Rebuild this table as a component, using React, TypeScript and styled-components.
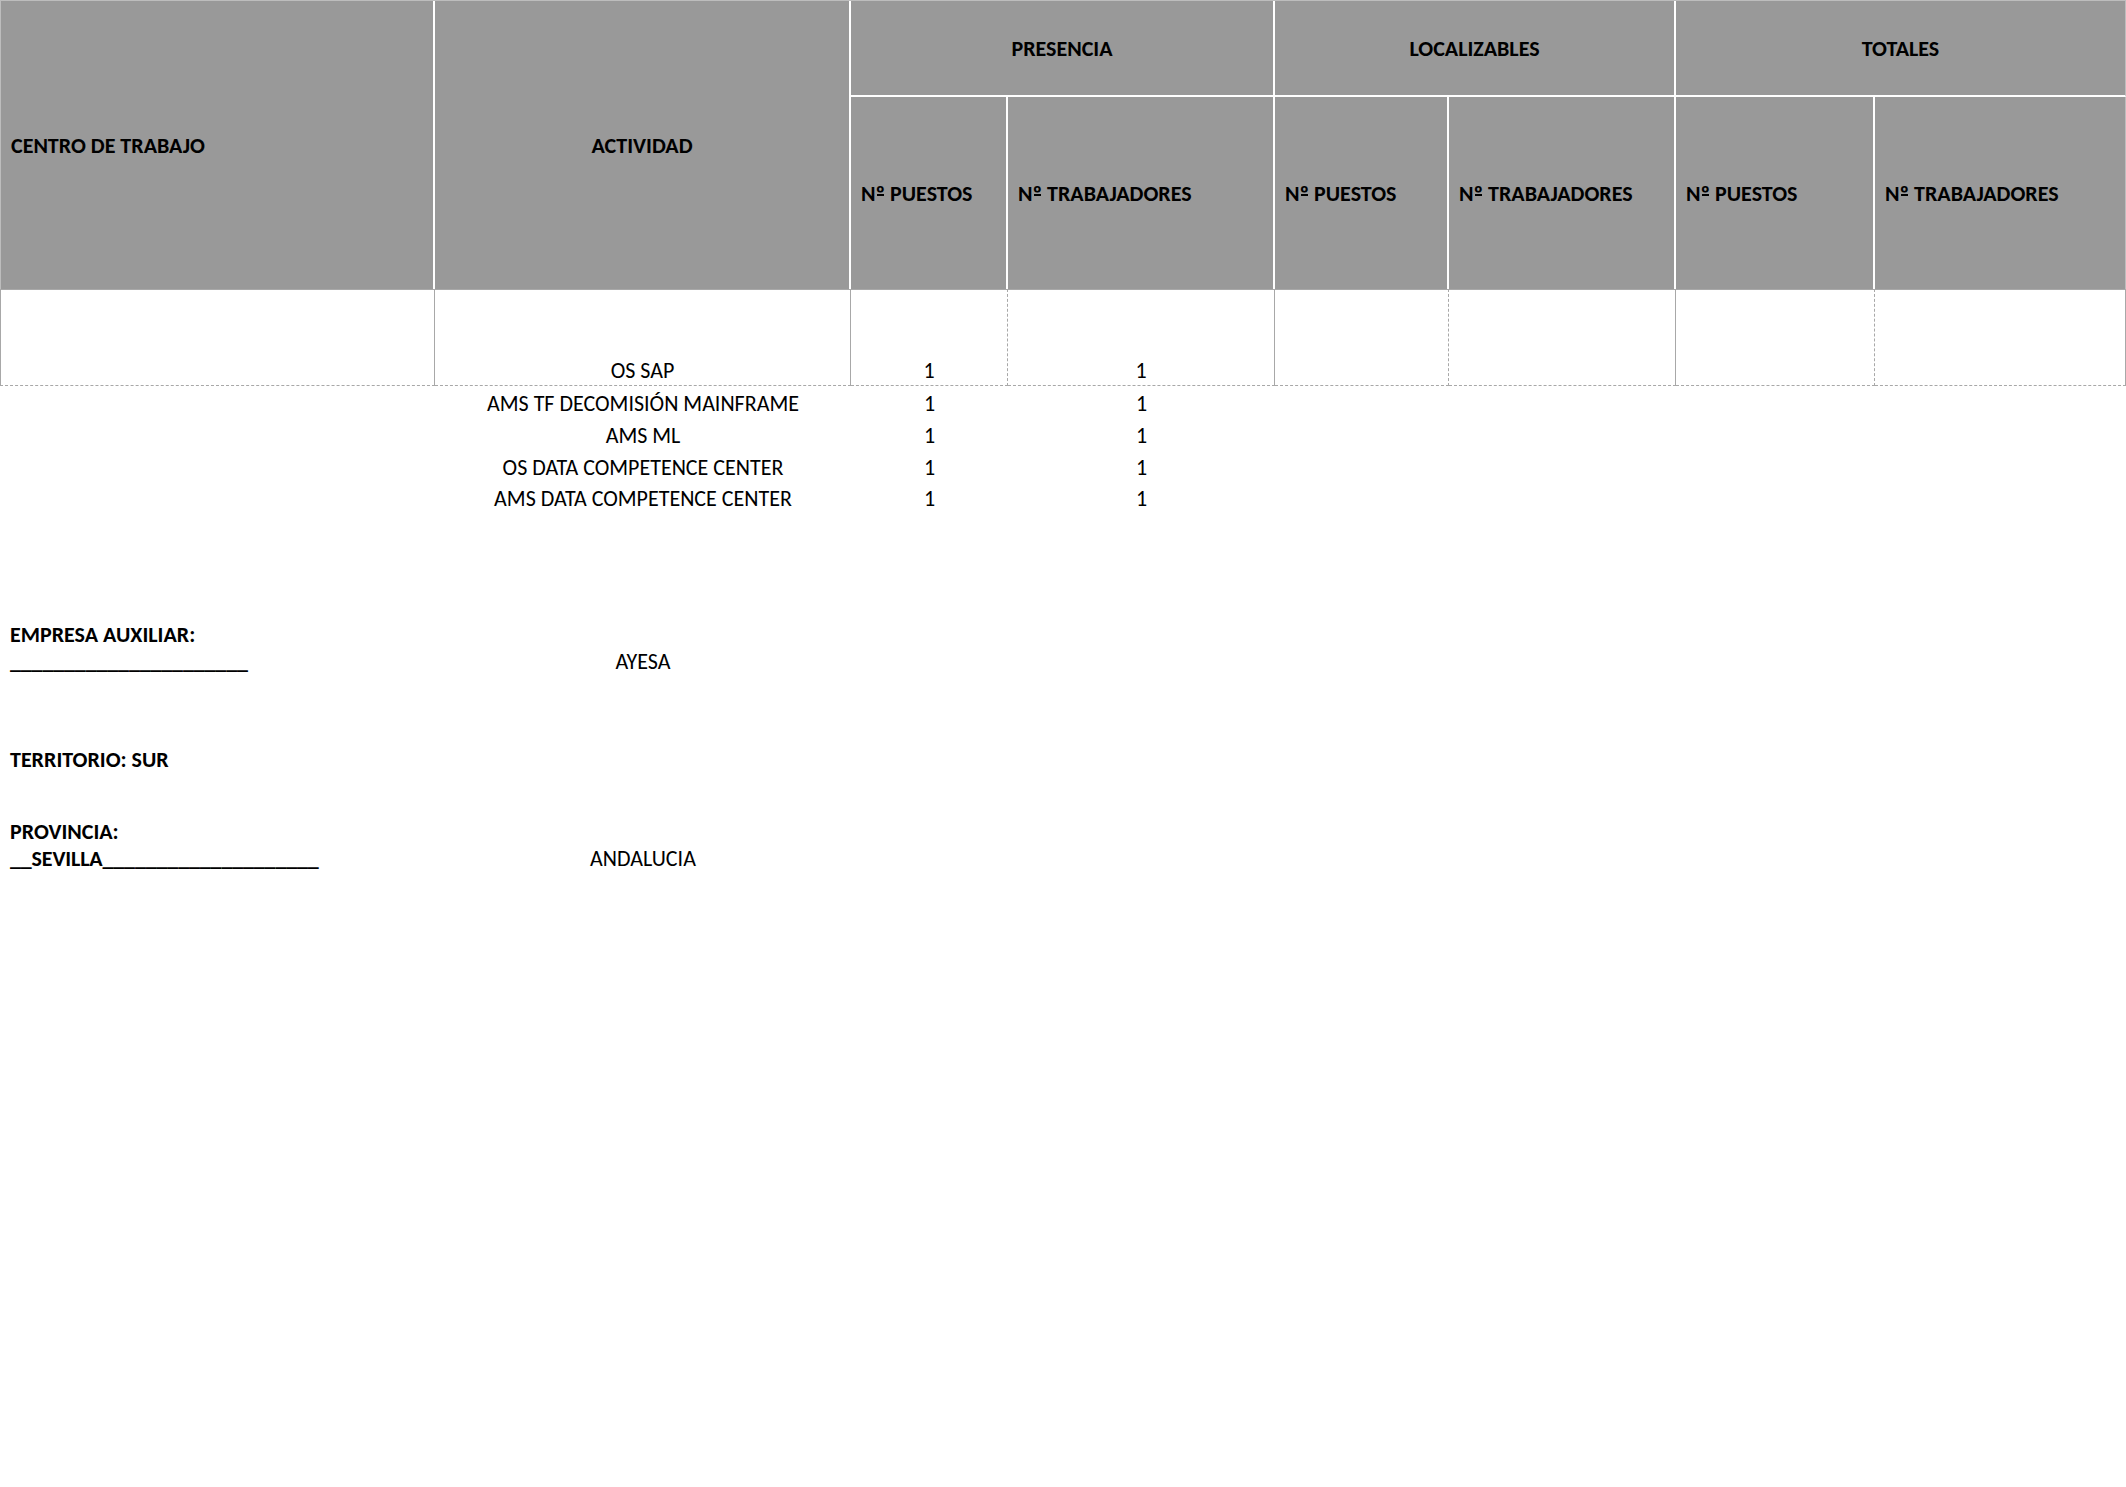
import React from "react";
import styled, { createGlobalStyle } from "styled-components";

const FONT = `Carlito, Lato, "Liberation Sans", sans-serif`;

const Global = createGlobalStyle`
  html, body { margin: 0; padding: 0; background: #ffffff; }
  body { font-family: ${FONT}; color: #000; }
`;

const COLS = "435px 416px 157px 267px 174px 227px 199px 251px";

const Page = styled.div`
  width: 2126px;
  min-height: 1487px;
`;

const Table = styled.div`
  display: grid;
  grid-template-columns: ${COLS};
  grid-template-rows: 96px 192px 97px;
  border-top: 1px solid #bdbdbd;
`;

const HeadCell = styled.div<{
  $align?: "left" | "center";
  $col: string;
  $row: string;
  $divider?: boolean;
  $first?: boolean;
  $last?: boolean;
}>`
  grid-column: ${(p) => p.$col};
  grid-row: ${(p) => p.$row};
  background: #999999;
  display: flex;
  align-items: center;
  justify-content: ${(p) => (p.$align === "left" ? "flex-start" : "center")};
  padding: 0 10px;
  box-sizing: border-box;
  border-right: ${(p) => (p.$last ? "1px solid #bdbdbd" : "2px solid #ffffff")};
  border-left: ${(p) => (p.$first ? "1px solid #bdbdbd" : "0")};
  border-bottom: ${(p) => (p.$divider ? "2px solid #ffffff" : "0")};
  font-weight: 700;
  font-size: 22px;
  line-height: 27px;
  white-space: nowrap;
`;

const HeadText = styled.span`
  display: inline-block;
  white-space: pre;
`;

const Ord = styled.span`
  position: relative;
  display: inline-block;
  &::after {
    content: "";
    position: absolute;
    left: 1px;
    right: 1px;
    top: 14px;
    height: 2px;
    background: currentColor;
  }
`;

const DataCell = styled.div<{ $dashed?: boolean; $first?: boolean }>`
  grid-row: 3;
  display: flex;
  align-items: flex-end;
  justify-content: center;
  box-sizing: border-box;
  border-top: 1px solid #a8a8a8;
  border-bottom: 1px dashed #a8a8a8;
  border-right: 1px ${(p) => (p.$dashed ? "dashed" : "solid")} #a8a8a8;
  border-left: ${(p) => (p.$first ? "1px solid #a8a8a8" : "0")};
  font-size: 22px;
  line-height: 29px;
  white-space: nowrap;
`;

const Sheet = styled.div`
  display: grid;
  grid-template-columns: ${COLS};
`;

const Cell = styled.div<{ $h?: number; $bold?: boolean; $center?: boolean }>`
  height: ${(p) => (p.$h ? `${p.$h}px` : "auto")};
  display: flex;
  flex-direction: column;
  justify-content: flex-end;
  align-items: ${(p) => (p.$center ? "center" : "flex-start")};
  padding: 0 ${(p) => (p.$center ? "0" : "10px")} ${(p) => (p.$h ? "1px" : "0")};
  box-sizing: border-box;
  font-size: 22px;
  line-height: 27px;
  font-weight: ${(p) => (p.$bold ? 700 : 400)};
  white-space: nowrap;
`;

const Blank = styled.span`
  letter-spacing: -0.15px;
`;

const Spacer = styled.div<{ $h: number }>`
  grid-column: 1 / -1;
  height: ${(p) => p.$h}px;
`;

const rows = [
  { act: "AMS TF DECOMISIÓN MAINFRAME", h: 32 },
  { act: "AMS ML", h: 32 },
  { act: "OS DATA COMPETENCE CENTER", h: 32 },
  { act: "AMS DATA COMPETENCE CENTER", h: 31 },
];

const Puestos = () => (
  <HeadText>
    N<Ord>º</Ord> PUESTOS
  </HeadText>
);
const Trabajadores = () => (
  <HeadText>
    N<Ord>º</Ord> TRABAJADORES
  </HeadText>
);

export default function App() {
  return (
    <Page>
      <Global />
      <Table>
        <HeadCell $col="1" $row="1 / 3" $align="left" $first>CENTRO DE TRABAJO</HeadCell>
        <HeadCell $col="2" $row="1 / 3">ACTIVIDAD</HeadCell>
        <HeadCell $col="3 / 5" $row="1" $divider>PRESENCIA</HeadCell>
        <HeadCell $col="5 / 7" $row="1" $divider>LOCALIZABLES</HeadCell>
        <HeadCell $col="7 / 9" $row="1" $divider $last>TOTALES</HeadCell>
        <HeadCell $col="3" $row="2" $align="left"><Puestos /></HeadCell>
        <HeadCell $col="4" $row="2" $align="left"><Trabajadores /></HeadCell>
        <HeadCell $col="5" $row="2" $align="left"><Puestos /></HeadCell>
        <HeadCell $col="6" $row="2" $align="left"><Trabajadores /></HeadCell>
        <HeadCell $col="7" $row="2" $align="left"><Puestos /></HeadCell>
        <HeadCell $col="8" $row="2" $align="left" $last><Trabajadores /></HeadCell>
        <DataCell $first />
        <DataCell>OS SAP</DataCell>
        <DataCell $dashed>1</DataCell>
        <DataCell>1</DataCell>
        <DataCell $dashed />
        <DataCell />
        <DataCell $dashed />
        <DataCell />
      </Table>
      <Sheet>
        {rows.map((r) => (
          <React.Fragment key={r.act}>
            <Cell $h={r.h} />
            <Cell $h={r.h} $center>{r.act}</Cell>
            <Cell $h={r.h} $center>1</Cell>
            <Cell $h={r.h} $center>1</Cell>
            <Cell $h={r.h} />
            <Cell $h={r.h} />
            <Cell $h={r.h} />
            <Cell $h={r.h} />
          </React.Fragment>
        ))}
        <Spacer $h={108} />
        <Cell $bold>
          <span>EMPRESA AUXILIAR:</span>
          <Blank>______________________</Blank>
        </Cell>
        <Cell $center>AYESA</Cell>
        <Spacer $h={71} />
        <Cell $bold>TERRITORIO: SUR</Cell>
        <Spacer $h={45} />
        <Cell $bold>
          <span>PROVINCIA:</span>
          <Blank>__SEVILLA____________________</Blank>
        </Cell>
        <Cell $center>ANDALUCIA</Cell>
      </Sheet>
    </Page>
  );
}
